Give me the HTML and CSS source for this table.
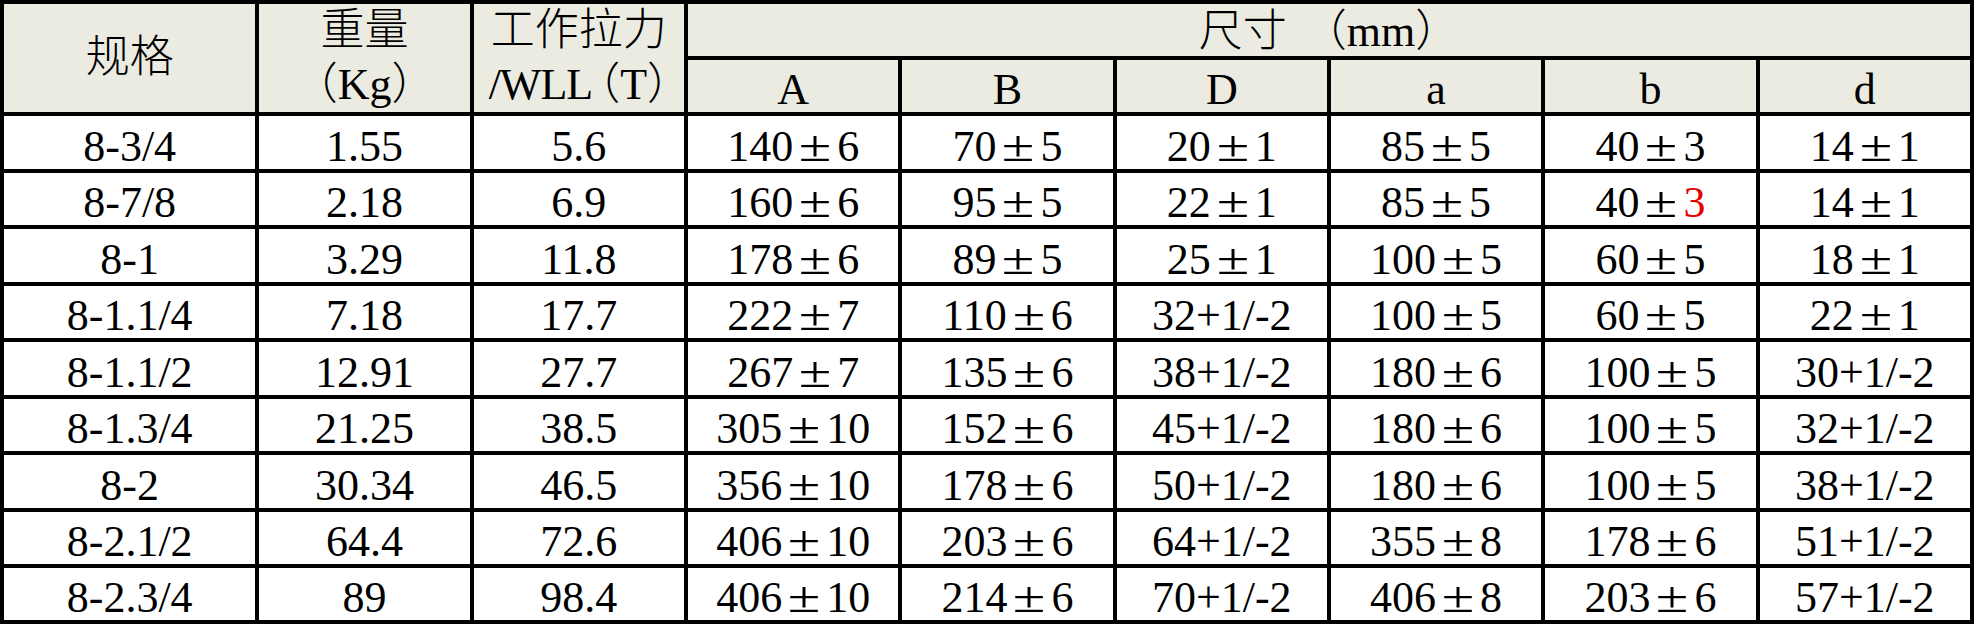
FILE: index.html
```html
<!DOCTYPE html>
<html lang="zh-CN">
<head>
<meta charset="utf-8">
<title>规格表</title>
<link rel="stylesheet" href="styles.css">
</head>
<body>
<table class="spec">
  <colgroup>
    <col class="c-first">
    <col class="c"><col class="c"><col class="c"><col class="c">
    <col class="c"><col class="c"><col class="c"><col class="c">
  </colgroup>
  <thead>
    <tr class="h1">
      <th rowspan="2" class="tall">规格</th>
      <th rowspan="2" class="tall">重量<br>（Kg）</th>
      <th rowspan="2" class="tall">工作拉力<br><span class="wll">/WLL<span class="half">（T）</span></span></th>
      <th colspan="6" class="group">尺寸<span class="unit">（mm）</span></th>
    </tr>
    <tr class="h2">
      <th>A</th><th>B</th><th>D</th><th>a</th><th>b</th><th>d</th>
    </tr>
  </thead>
  <tbody>
    <tr><td>8-3/4</td><td>1.55</td><td>5.6</td><td>140<span class="pm">±</span>6</td><td>70<span class="pm">±</span>5</td><td>20<span class="pm">±</span>1</td><td>85<span class="pm">±</span>5</td><td>40<span class="pm">±</span>3</td><td>14<span class="pm">±</span>1</td></tr>
    <tr><td>8-7/8</td><td>2.18</td><td>6.9</td><td>160<span class="pm">±</span>6</td><td>95<span class="pm">±</span>5</td><td>22<span class="pm">±</span>1</td><td>85<span class="pm">±</span>5</td><td>40<span class="pm">±</span><span class="red">3</span></td><td>14<span class="pm">±</span>1</td></tr>
    <tr><td>8-1</td><td>3.29</td><td>11.8</td><td>178<span class="pm">±</span>6</td><td>89<span class="pm">±</span>5</td><td>25<span class="pm">±</span>1</td><td>100<span class="pm">±</span>5</td><td>60<span class="pm">±</span>5</td><td>18<span class="pm">±</span>1</td></tr>
    <tr><td>8-1.1/4</td><td>7.18</td><td>17.7</td><td>222<span class="pm">±</span>7</td><td>110<span class="pm">±</span>6</td><td>32+1/-2</td><td>100<span class="pm">±</span>5</td><td>60<span class="pm">±</span>5</td><td>22<span class="pm">±</span>1</td></tr>
    <tr><td>8-1.1/2</td><td>12.91</td><td>27.7</td><td>267<span class="pm">±</span>7</td><td>135<span class="pm">±</span>6</td><td>38+1/-2</td><td>180<span class="pm">±</span>6</td><td>100<span class="pm">±</span>5</td><td>30+1/-2</td></tr>
    <tr><td>8-1.3/4</td><td>21.25</td><td>38.5</td><td>305<span class="pm">±</span>10</td><td>152<span class="pm">±</span>6</td><td>45+1/-2</td><td>180<span class="pm">±</span>6</td><td>100<span class="pm">±</span>5</td><td>32+1/-2</td></tr>
    <tr><td>8-2</td><td>30.34</td><td>46.5</td><td>356<span class="pm">±</span>10</td><td>178<span class="pm">±</span>6</td><td>50+1/-2</td><td>180<span class="pm">±</span>6</td><td>100<span class="pm">±</span>5</td><td>38+1/-2</td></tr>
    <tr><td>8-2.1/2</td><td>64.4</td><td>72.6</td><td>406<span class="pm">±</span>10</td><td>203<span class="pm">±</span>6</td><td>64+1/-2</td><td>355<span class="pm">±</span>8</td><td>178<span class="pm">±</span>6</td><td>51+1/-2</td></tr>
    <tr><td>8-2.3/4</td><td>89</td><td>98.4</td><td>406<span class="pm">±</span>10</td><td>214<span class="pm">±</span>6</td><td>70+1/-2</td><td>406<span class="pm">±</span>8</td><td>203<span class="pm">±</span>6</td><td>57+1/-2</td></tr>
  </tbody>
</table>
</body>
</html>
```
FILE: styles.css
```css
html, body {
  margin: 0;
  padding: 0;
  background: #ffffff;
}

body {
  font-family: "Liberation Serif", "Noto Sans CJK SC", serif;
  color: #000000;
}

.spec {
  border-collapse: collapse;
  table-layout: fixed;
  width: 1974px;
  font-size: 44px;
}

.spec .c-first { width: 255px; }
.spec .c { width: 214px; }

.spec th,
.spec td {
  border: 4px solid #000000;
  padding: 0;
  text-align: center;
  vertical-align: middle;
  font-weight: 300;
  line-height: 44px;
  white-space: nowrap;
}

.spec thead th {
  background: #ecebe2;
}

.spec .h1 { height: 56px; }
.spec .h2 { height: 56px; }

.spec .tall {
  line-height: 54px;
}

.spec .wll {
  letter-spacing: -1px;
}

.spec .half {
  font-feature-settings: "halt" 1;
  letter-spacing: 0;
  margin-left: 6px;
}

.spec .group {
  padding-top: 4px;
}

.spec .unit {
  margin-left: 16px;
}

.spec .h2 th {
  padding-top: 8px;
}

.spec tbody tr { height: 56px; }
.spec tbody tr:nth-child(odd):not(:last-child) { height: 57px; }

.spec tbody td {
  background: #ffffff;
  padding-top: 8px;
}

.pm {
  display: inline-block;
  width: 44px;
  text-align: center;
  transform: scaleX(1.35);
}

.red {
  color: #e60000;
}
```
